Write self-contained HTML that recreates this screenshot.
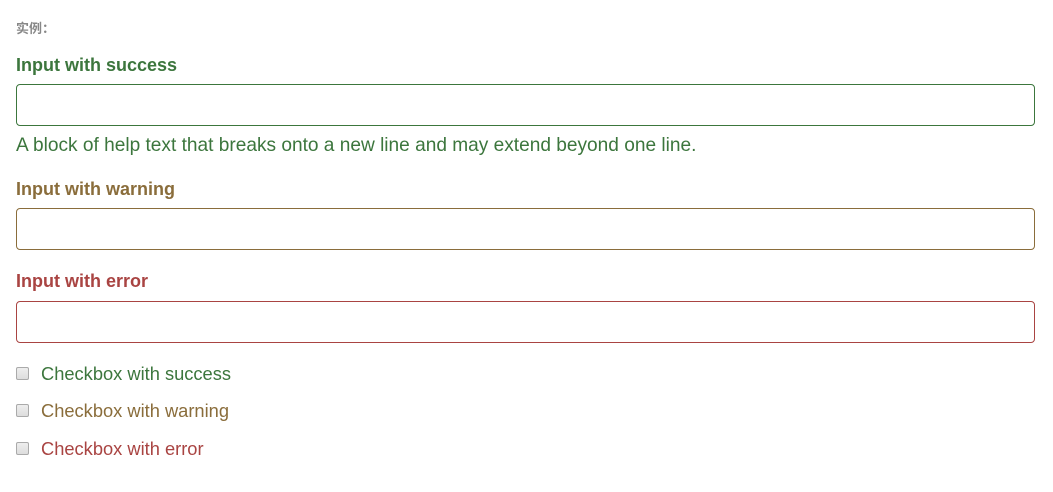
<!DOCTYPE html>
<html><head><meta charset="utf-8"><style>
body{margin:0;width:1053px;height:492px;background:#fff;font-family:"Liberation Sans","Noto Sans CJK SC",sans-serif;position:relative;overflow:hidden}
.a{position:absolute;white-space:nowrap}
.t{left:16px;top:18px;font-size:13px;font-weight:bold;color:#888}
.l{left:16px;font-size:18px;font-weight:bold;line-height:20px}
.in{position:absolute;left:16px;width:1017px;height:40px;border:1px solid;border-radius:4px;box-sizing:content-box}
.h{left:16px;font-size:19.1px;line-height:20px}
.cb{position:absolute;left:16px;width:11px;height:11px;border:1px solid #aaa;border-radius:2px;background:linear-gradient(#eee,#ddd)}
.c{left:41px;font-size:18.3px;line-height:20px}
.s{color:#3c763d}.w{color:#8a6d3b}.e{color:#a94442}
</style></head><body>
<div class="a t">实例：</div>
<div class="a l s" style="top:55px">Input with success</div>
<div class="in" style="top:84px;border-color:#3c763d"></div>
<div class="a h s" style="top:136px">A block of help text that breaks onto a new line and may extend beyond one line.</div>
<div class="a l w" style="top:179px">Input with warning</div>
<div class="in" style="top:208px;border-color:#8a6d3b"></div>
<div class="a l e" style="top:271px">Input with error</div>
<div class="in" style="top:301px;border-color:#a94442"></div>
<div class="cb" style="top:367px"></div><div class="a c s" style="top:364px">Checkbox with success</div>
<div class="cb" style="top:404px"></div><div class="a c w" style="top:401px">Checkbox with warning</div>
<div class="cb" style="top:442px"></div><div class="a c e" style="top:439px">Checkbox with error</div>
</body></html>
